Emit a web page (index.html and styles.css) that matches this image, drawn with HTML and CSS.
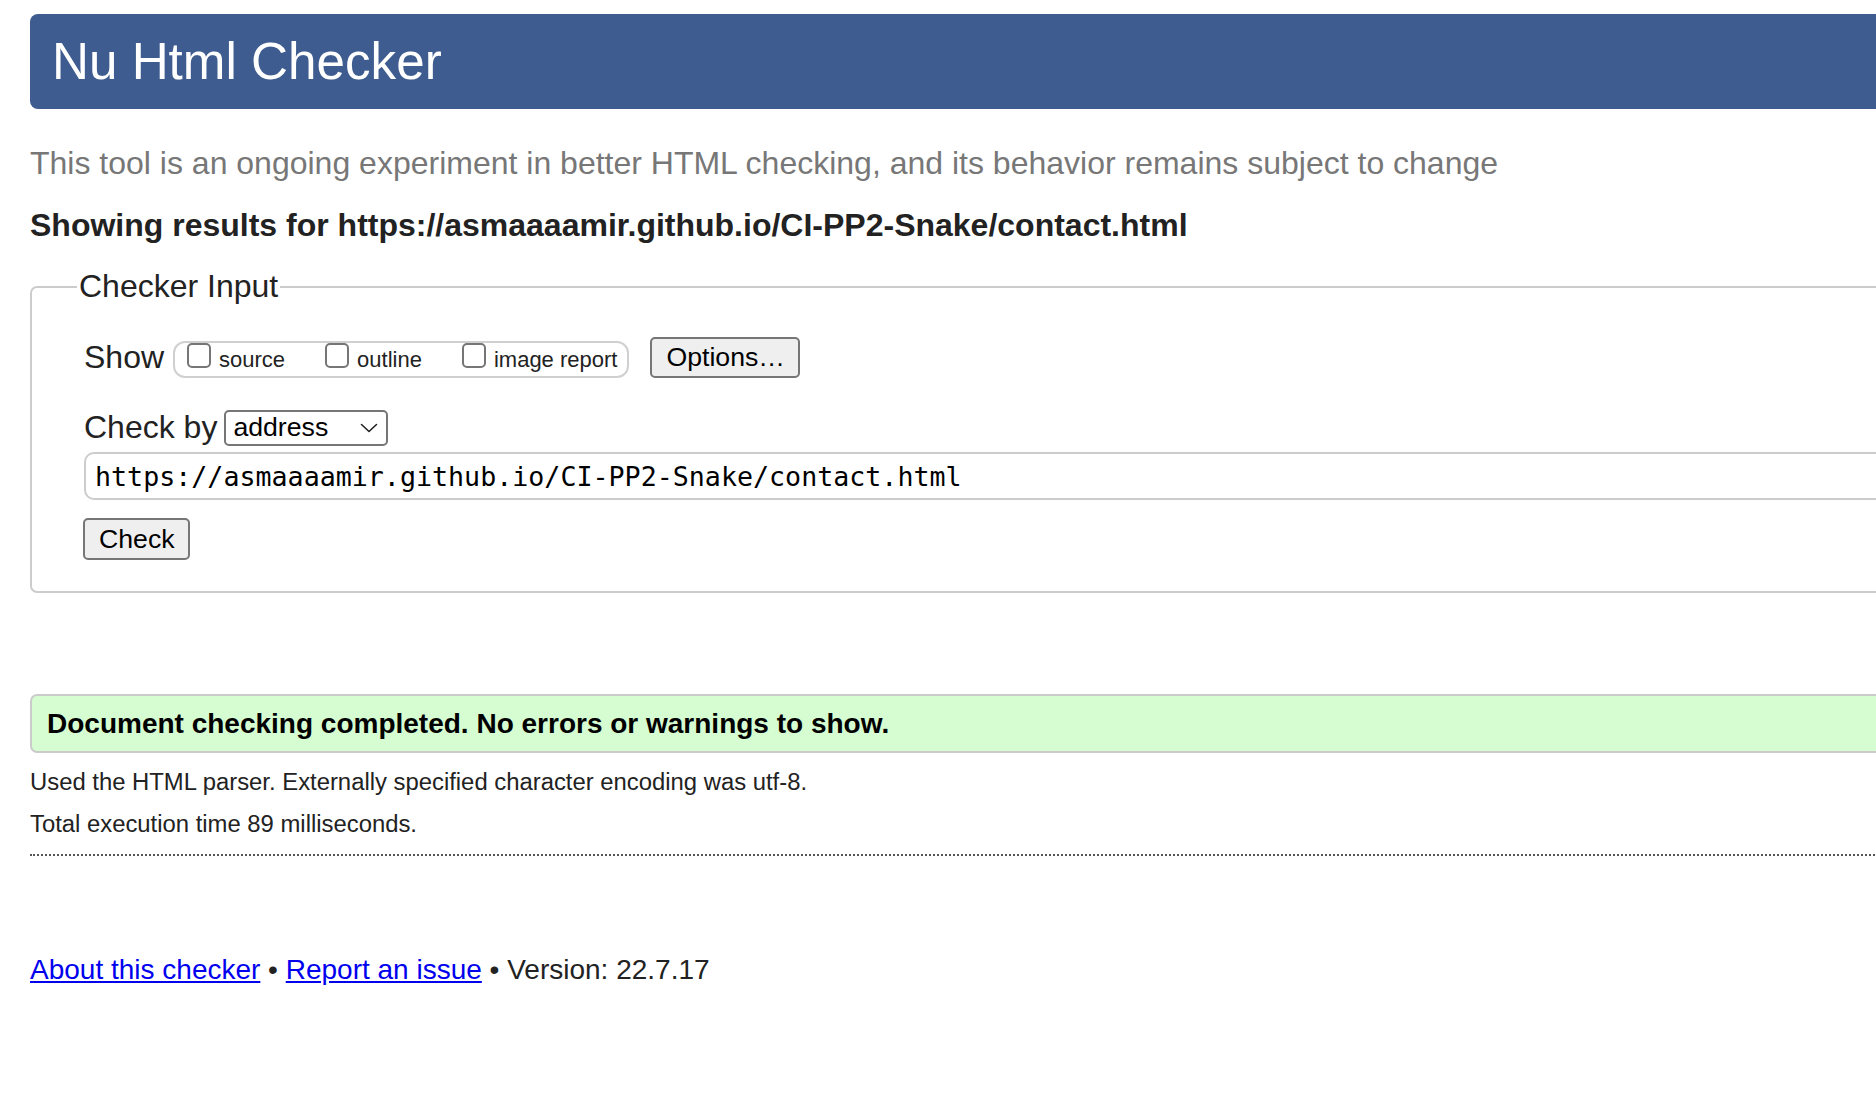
FILE: index.html
```html
<!DOCTYPE html>
<html lang="en">
<head>
<meta charset="utf-8">
<title>Showing results for https://asmaaaamir.github.io/CI-PP2-Snake/contact.html - Nu Html Checker</title>
<link rel="stylesheet" href="styles.css">
</head>
<body>
<div class="page">
  <header class="banner"><h1 class="banner-title">Nu Html Checker</h1></header>
  <p class="subtitle">This tool is an ongoing experiment in better HTML checking, and its behavior remains subject to change</p>
  <h2 class="results-heading">Showing results for https://asmaaaamir.github.io/CI-PP2-Snake/contact.html</h2>
  <form class="checker">
    <fieldset class="checker-input">
      <legend class="checker-legend">Checker Input</legend>
      <div class="row show-row">
        <span class="row-label">Show</span>
        <div class="opts">
          <label class="opt"><input type="checkbox" class="cb"><span>source</span></label>
          <label class="opt"><input type="checkbox" class="cb"><span>outline</span></label>
          <label class="opt"><input type="checkbox" class="cb"><span>image report</span></label>
        </div>
        <button type="button" class="btn btn-options">Options…</button>
      </div>
      <div class="row by-row">
        <span class="row-label">Check by</span>
        <div class="select">
          <span>address</span>
          <svg class="chev" width="18" height="10" viewBox="0 0 18 10"><path d="M1.5 1.5 L9 8.5 L16.5 1.5" fill="none" stroke="#222" stroke-width="1.6" stroke-linecap="round" stroke-linejoin="round"/></svg>
        </div>
      </div>
      <div class="url">https://asmaaaamir.github.io/CI-PP2-Snake/contact.html</div>
      <div class="row check-row"><button type="button" class="btn btn-check">Check</button></div>
    </fieldset>
  </form>
  <div class="success">Document checking completed. No errors or warnings to show.</div>
  <p class="details">Used the HTML parser. Externally specified character encoding was utf-8.</p>
  <p class="details details-time">Total execution time 89 milliseconds.</p>
  <hr class="dotted">
  <p class="footer"><a href="#">About this checker</a> • <a href="#">Report an issue</a> • Version: 22.7.17</p>
</div>
</body>
</html>
```

FILE: styles.css
```css
html, body {
  margin: 0;
  padding: 0;
  overflow: hidden;
  background: #fff;
}
body {
  font-family: "Liberation Sans", Arial, sans-serif;
  color: #222;
}
.page {
  width: 2200px;
  padding: 14px 0 0 30px;
}
.banner {
  height: 95px;
  background: #3e5c8f;
  border-radius: 8px;
  display: flex;
  align-items: center;
  padding-left: 22px;
}
.banner-title {
  margin: 0;
  font-size: 51.2px;
  font-weight: normal;
  color: #fff;
  line-height: 1;
}
.subtitle {
  margin: 36px 0 0;
  font-size: 32px;
  line-height: 37px;
  color: #777;
}
.results-heading {
  margin: 25px 0 0;
  font-size: 32px;
  line-height: 37px;
  font-weight: bold;
  color: #222;
}
.checker {
  margin: 24px 0 0;
}
.checker-input {
  margin: 0;
  border: 2px solid #ccc;
  border-radius: 7px;
  padding: 32px 0 31px 52px;
}
.checker-legend {
  font-size: 32px;
  line-height: 37px;
  padding: 0 2px;
  margin-left: -7px;
  color: #222;
}
.row {
  display: flex;
  align-items: center;
}
.row-label {
  font-size: 32px;
  line-height: 37px;
}
.show-row {
  height: 41px;
}
.opts {
  display: flex;
  align-items: flex-start;
  gap: 40px;
  box-sizing: border-box;
  height: 37px;
  margin-left: 9px;
  padding: 0 10px 0 12px;
  border: 2px solid #d0d0d0;
  border-radius: 12px;
  margin-top: 4px;
}
.opt {
  display: flex;
  align-items: flex-end;
  height: 27px;
  font-size: 22px;
  line-height: 25px;
  color: #222;
}
.cb {
  appearance: none;
  -webkit-appearance: none;
  width: 24px;
  height: 25px;
  margin: 0 8px 0 0;
  border: 2px solid #767676;
  border-radius: 5px;
  background: #fff;
  box-sizing: border-box;
  align-self: flex-start;
}
.opt span {
  position: relative;
  top: 2px;
}
.btn {
  font-family: "Liberation Sans", Arial, sans-serif;
  font-size: 26.67px;
  color: #000;
  background: #efefef;
  border: 2px solid #767676;
  border-radius: 5px;
  box-sizing: border-box;
  padding: 0 14px;
  line-height: 1;
}
.btn-options {
  margin-left: 21px;
  height: 41px;
  width: 150px;
}
.by-row {
  margin-top: 32px;
  height: 35px;
}
.select {
  margin-left: 7px;
  box-sizing: border-box;
  width: 164px;
  height: 36px;
  border: 2px solid #767676;
  border-radius: 5px;
  background: #fff;
  display: flex;
  align-items: center;
  justify-content: space-between;
  padding: 0 8px 0 7px;
  font-size: 26.67px;
  color: #000;
}
.chev {
  display: block;
}
.url {
  margin-top: 7px;
  box-sizing: border-box;
  height: 48px;
  border: 2px solid #ccc;
  border-radius: 10px;
  padding: 0 9px;
  display: flex;
  align-items: center;
  font-family: "DejaVu Sans Mono", "Liberation Mono", monospace;
  font-size: 26.67px;
  color: #000;
}
.check-row {
  margin-top: 18px;
}
.btn-check {
  height: 42px;
  width: 107px;
  margin-left: -1px;
}
.success {
  margin-top: 101px;
  box-sizing: border-box;
  height: 59px;
  background: #d6fcd1;
  border: 2px solid #cbcbcb;
  border-radius: 7px;
  padding: 0 15px;
  display: flex;
  align-items: center;
  font-size: 28px;
  font-weight: bold;
  color: #000;
}
.details {
  margin: 15px 0 0;
  font-size: 23.85px;
  line-height: 28px;
  color: #222;
}
.details-time {
  margin-top: 14px;
}
.dotted {
  margin: 16px 0 0;
  height: 0;
  border: 0;
  border-top: 2px dotted #555;
}
.footer {
  margin: 98px 0 0;
  font-size: 28px;
  line-height: 32px;
  color: #222;
}
.footer a {
  color: #0000ee;
  text-decoration: underline;
}
```
